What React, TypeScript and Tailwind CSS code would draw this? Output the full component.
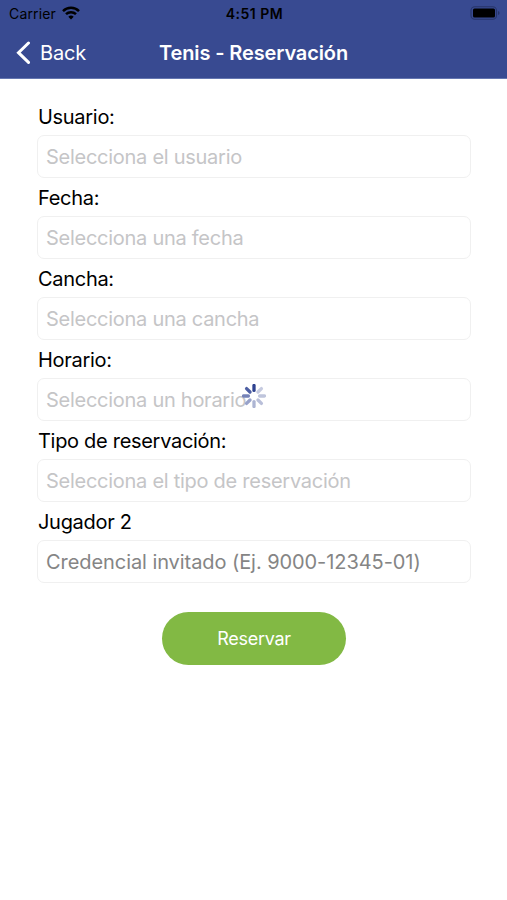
const fields = [
  { label: 'Usuario:', placeholder: 'Selecciona el usuario' },
  { label: 'Fecha:', placeholder: 'Selecciona una fecha' },
  { label: 'Cancha:', placeholder: 'Selecciona una cancha' },
  { label: 'Horario:', placeholder: 'Selecciona un horario', loading: true },
  { label: 'Tipo de reservación:', placeholder: 'Selecciona el tipo de reservación' },
  { label: 'Jugador 2', placeholder: 'Credencial invitado (Ej. 9000-12345-01)', strong: true },
];

const spokes = [
  { angle: 0, color: '#2f4390' },
  { angle: 45, color: '#c6cbe0' },
  { angle: 90, color: '#bfc5dc' },
  { angle: 135, color: '#b9bfd9' },
  { angle: 180, color: '#adb5d3' },
  { angle: 225, color: '#98a2ca' },
  { angle: 270, color: '#7582b7' },
  { angle: 315, color: '#4e5fa3' },
];

function Spinner() {
  return (
    <svg className="absolute left-[204px] top-[5px] size-6" viewBox="-12 -12 24 24">
      {spokes.map((s) => (
        <line
          key={s.angle}
          y1="-5.6"
          y2="-10.5"
          stroke={s.color}
          strokeWidth="3.3"
          strokeLinecap="round"
          transform={`rotate(${s.angle})`}
        />
      ))}
    </svg>
  );
}

function StatusBar() {
  return (
    <div className="grid h-[27px] grid-cols-3 items-center pl-[9px] pr-[7px] text-black">
      <div className="flex items-center gap-[6px]">
        <span className="text-[14px] leading-[27px] tracking-[0.15px]">Carrier</span>
        <svg className="mb-[2px] h-[14px] w-[18px]" viewBox="0 0 18 14" fill="none" stroke="black" strokeWidth="2.5">
          <path d="M1 5.1a11.4 11.4 0 0 1 16 0" />
          <path d="M4 8.2a7.1 7.1 0 0 1 10 0" />
          <path d="M6.3 10.8a3.8 3.8 0 0 1 5.4 0L9 13.5Z" fill="black" stroke="none" />
        </svg>
      </div>
      <span className="text-center text-[14px] font-semibold leading-[27px] tracking-[0.5px]">4:51 PM</span>
      <svg className="mb-px h-[14px] w-[30px] justify-self-end" viewBox="0 0 30 14">
        <rect x="1" y="0.7" width="25.5" height="12.6" rx="3.8" fill="none" stroke="#273569" strokeWidth="1.1" />
        <rect x="3" y="2.5" width="22" height="9" rx="1.5" fill="black" />
        <path d="M28 5v4q1.6-.7 1.6-2T28 5Z" fill="#273569" />
      </svg>
    </div>
  );
}

export default function App() {
  return (
    <div className="min-h-[900px] w-full bg-white font-['Inter','Liberation_Sans',sans-serif] text-black">
      <header className="h-[79px] border-b border-[#6476b0] bg-[#384a91]">
        <StatusBar />
        <div className="grid h-[51px] grid-cols-[130px_1fr_130px] items-center text-white">
          <button className="flex items-center gap-[9px] pl-4 text-left">
            <svg
              className="h-6 w-[15px]"
              viewBox="0 0 15 24"
              fill="none"
              stroke="white"
              strokeWidth="3"
              strokeLinecap="round"
            >
              <path d="M12.500 2 2.500 11.700l10 9.700" />
            </svg>
            <span className="text-[20px] leading-6 tracking-[-0.2px]">Back</span>
          </button>
          <h1 className="whitespace-nowrap text-center text-[20px] font-semibold leading-6 tracking-[-0.12px]">
            Tenis - Reservación
          </h1>
        </div>
      </header>
      <main className="flex flex-col items-center pl-[37px] pr-[36px] pt-[25px]">
        <div className="flex w-full flex-col gap-[3px]">
          {fields.map((f) => (
            <label key={f.label} className="flex h-[78px] flex-col">
              <span className="h-[31px] pl-px pt-px text-[20px] leading-6 tracking-[-0.3px]">{f.label}</span>
              <div
                className={`relative flex h-[43px] items-center whitespace-nowrap rounded-[7px] border-[1.5px] border-[#f0f0f0] pl-2 text-[20px] ${
                  f.strong ? 'tracking-[-0.070px] text-[#858585]' : 'tracking-[-0.270px] text-[#c5c5c7]'
                }`}
              >
                {f.placeholder}
                {f.loading && <Spinner />}
              </div>
            </label>
          ))}
        </div>
        <button className="mt-[25px] h-[53px] w-[184px] rounded-[27px] bg-[#82b944] text-[18px] tracking-[-0.3px] text-white">
          Reservar
        </button>
      </main>
    </div>
  );
}
